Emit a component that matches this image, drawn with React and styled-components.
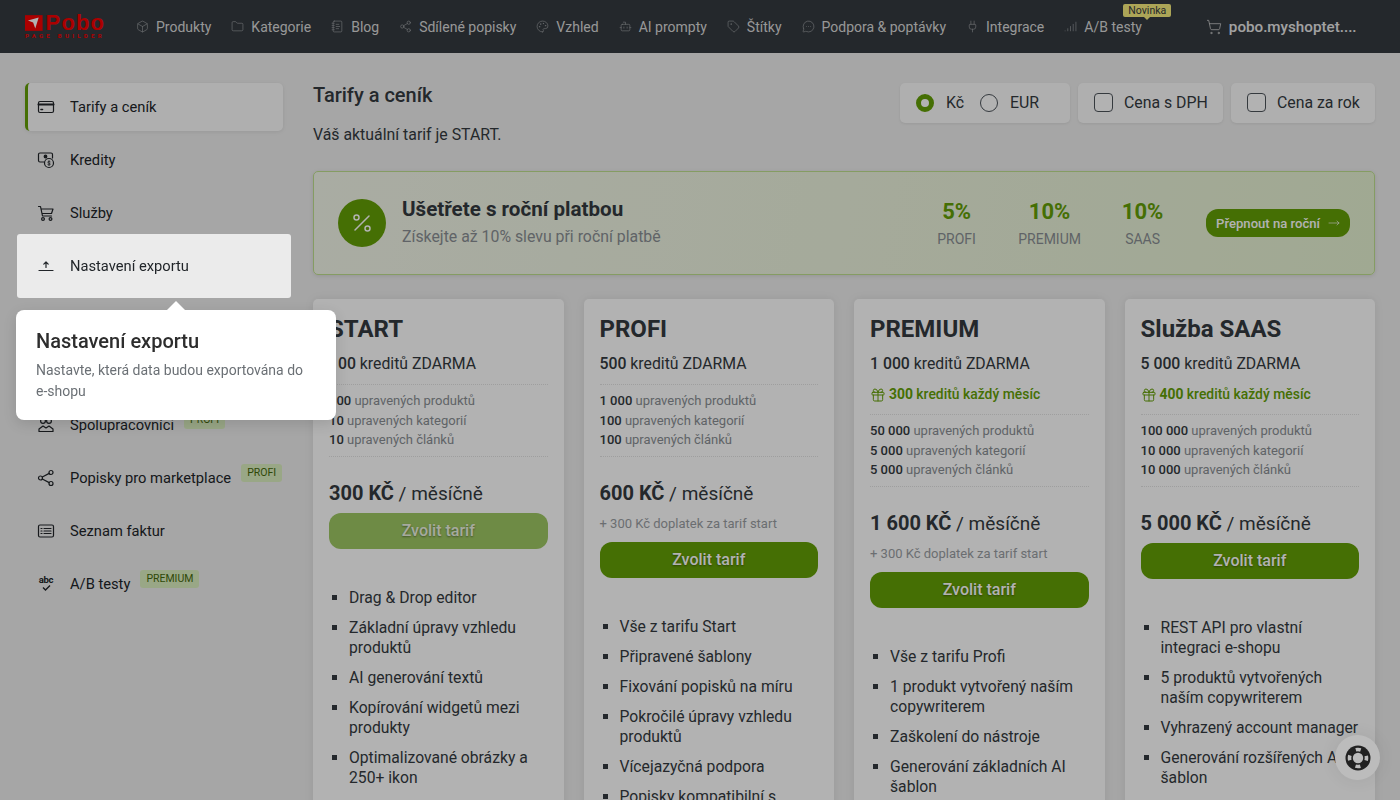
import React from "react";
import styled, { createGlobalStyle } from "styled-components";
import {
  Box, Folder, NotebookText, Share2, Palette, Bot, Tag, MessageCircleMore, Plug, Signal,
  ShoppingCart, Percent, MoveRight, Gift,
} from "lucide-react";

const GlobalStyle = createGlobalStyle`
  html, body { margin: 0; padding: 0; height: 800px; overflow: hidden; }
  body { background: #eeeeee; font-family: Roboto, "Liberation Sans", sans-serif; color: #343a40; }
  * { box-sizing: border-box; }
`;

// Shell
const Page = styled.div`
  width: 1400px;
  height: 800px;
  overflow: hidden;
  position: relative;
`;
const Overlay = styled.div`
  position: fixed;
  inset: 0;
  background: rgba(0, 0, 0, 0.3);
  z-index: 10;
`;

// Header
const Header = styled.header`
  height: 53px;
  background: #343a40;
  display: flex;
  align-items: center;
  padding-left: 25px;
`;
const Logo = styled.div`
  width: 80px;
  margin-right: 31px;
  display: flex;
  flex-direction: column;
  color: #f50000;
  line-height: 1;
`;
const LogoTop = styled.div`
  display: flex;
  align-items: center;
  gap: 3px;
  height: 17px;
  font-weight: 700;
  font-size: 22px;
  letter-spacing: 1.1px;
  font-family: "Liberation Sans", sans-serif;
`;
const LogoSub = styled.div`
  font-size: 6px;
  font-weight: 700;
  letter-spacing: 3.3px;
  margin-top: 2px;
  white-space: nowrap;
`;
const Nav = styled.nav`
  display: flex;
  align-items: center;
  gap: 20px;
`;
const NavLink = styled.a`
  position: relative;
  display: flex;
  align-items: center;
  gap: 7px;
  font-size: 14px;
  color: #d9d9d9;
  white-space: nowrap;
  svg { color: #9a9da0; }
`;
const NewBadge = styled.span`
  position: absolute;
  top: -15px;
  left: 59px;
  width: 48px;
  text-align: center;
  background: #f7ec7d;
  color: #343a40;
  font-size: 10.5px;
  line-height: 13px;
  border-radius: 2px;
  &::after {
    content: "";
    position: absolute;
    left: 50%;
    bottom: -3px;
    margin-left: -3px;
    border-left: 3px solid transparent;
    border-right: 3px solid transparent;
    border-top: 3px solid #f7ec7d;
  }
`;
const Shop = styled.div`
  margin-left: 64px;
  display: flex;
  align-items: center;
  gap: 7px;
  color: #e8e8e8;
  font-size: 15.2px;
  font-weight: 500;
  svg { color: #c8c8c8; }
`;

// Body layout
const Main = styled.div`
  display: grid;
  grid-template-columns: 258px 1fr;
  column-gap: 30px;
  padding: 30px 25px 0;
`;

// Side menu
const Side = styled.aside`
  display: flex;
  flex-direction: column;
  gap: 5px;
`;
const MenuRow = styled.div`
  position: relative;
  height: 48px;
  display: flex;
  align-items: center;
  gap: 15px;
  padding-left: 9px;
  font-size: 14.7px;
  color: #212529;
  border-radius: 5px;
  border-left: 3px solid ${(p) => (p.$active ? "#649f06" : "transparent")};
  background: ${(p) => (p.$active ? "#fbfbfb" : "transparent")};
  box-shadow: ${(p) => (p.$active ? "0 1px 4px rgba(0,0,0,.08)" : "none")};
  svg { flex: none; }
`;
const Spotlight = styled(MenuRow)`
  z-index: 20;
  margin: -8px;
  height: 64px;
  padding-left: 17px;
  background: #ebebeb;
  border-radius: 3px;
  border-left: 3px solid transparent;
`;
const PlanTag = styled.span`
  align-self: flex-start;
  margin: 10px 0 0 -5px;
  background: #dcefc0;
  color: #44690a;
  font-size: 10.5px;
  line-height: 18px;
  padding: 0 6px;
  border-radius: 3px;
`;
const AbcMark = styled.span`
  width: 18px;
  height: 18px;
  flex: none;
  display: flex;
  flex-direction: column;
  align-items: center;
  font-size: 9.5px;
  font-weight: 700;
  line-height: 10px;
  letter-spacing: -0.3px;
  color: #212529;
`;
const Popover = styled.div`
  position: absolute;
  z-index: 20;
  left: 16px;
  top: 310px;
  width: 320px;
  height: 110px;
  background: #fff;
  border-radius: 8px;
  padding: 20px;
  box-shadow: 0 4px 14px rgba(0,0,0,.12);
  &::before {
    content: "";
    position: absolute;
    top: -9px;
    left: 151px;
    border-left: 9px solid transparent;
    border-right: 9px solid transparent;
    border-bottom: 9px solid #fff;
  }
`;
const PopoverTitle = styled.div`
  font-size: 20px;
  font-weight: 500;
  line-height: 23px;
  color: #2d2d2d;
  margin-bottom: 7px;
`;
const PopoverText = styled.div`
  font-size: 14px;
  line-height: 21px;
  color: #6b7075;
`;

// Content
const Content = styled.section`
  min-width: 0;
`;
const TopRow = styled.div`
  display: flex;
  justify-content: space-between;
  height: 88px;
`;
const Title = styled.h1`
  margin: 0;
  font-size: 20px;
  font-weight: 500;
  line-height: 24px;
`;
const Lead = styled.p`
  margin: 18px 0 0;
  font-size: 15.85px;
  line-height: 19px;
  color: #343a40;
`;
const Toggles = styled.div`
  display: flex;
  gap: 8px;
  height: 40px;
`;
const Toggle = styled.div`
  display: flex;
  align-items: center;
  height: 40px;
  width: ${(p) => p.$w}px;
  padding: 0 0 1px 16px;
  background: #fbfbfb;
  border-radius: 5px;
  box-shadow: 0 1px 3px rgba(0,0,0,.08);
  font-size: 15.85px;
  color: #343a40;
`;
const Radio = styled.span`
  width: 18px;
  height: 18px;
  border-radius: 50%;
  margin-right: 12px;
  margin-left: ${(p) => p.$gap || 0}px;
  background: #fff;
  border: ${(p) => (p.$on ? "5px solid #649f06" : "1px solid #4c535a")};
`;
const Check = styled.span`
  width: 19px;
  height: 19px;
  margin-right: 11px;
  border-radius: 4px;
  background: #fff;
  border: 1px solid #4c535a;
`;

const Promo = styled.div`
  height: 104px;
  border: 1px solid #bfe08f;
  border-radius: 5px;
  background: linear-gradient(100deg, #f3f6ea, #e6f2d2);
  box-shadow: 0 1px 4px rgba(0,0,0,.1);
  display: flex;
  align-items: center;
  padding: 0 24px;
`;
const PromoIcon = styled.div`
  width: 48px;
  height: 48px;
  border-radius: 50%;
  background: #649f06;
  color: #fff;
  display: flex;
  align-items: center;
  justify-content: center;
  margin-right: 16px;
`;
const PromoText = styled.div`
  flex: 1;
  margin-bottom: 3px;
`;
const PromoTitle = styled.div`
  font-size: 20.6px;
  font-weight: 700;
  line-height: 24px;
  color: #343a40;
`;
const PromoSub = styled.div`
  font-size: 15.85px;
  line-height: 19px;
  margin-top: 6px;
  color: #8a8f94;
`;
const Stats = styled.div`
  display: flex;
  margin-right: 17px;
`;
const Stat = styled.div`
  width: ${(p) => p.$w}px;
  text-align: center;
`;
const StatValue = styled.div`
  font-size: 22px;
  font-weight: 700;
  line-height: 26px;
  color: #649f06;
`;
const StatLabel = styled.div`
  font-size: 14px;
  line-height: 17px;
  margin-top: 6px;
  color: #8a8f94;
`;
const SwitchButton = styled.div`
  display: flex;
  align-items: center;
  gap: 8px;
  height: 28px;
  padding: 0 10px;
  border-radius: 12px;
  background: #649f06;
  color: #fff;
  font-size: 13.1px;
  font-weight: 500;
  white-space: nowrap;
`;

// Plans
const Plans = styled.div`
  display: grid;
  grid-template-columns: repeat(4, 1fr);
  gap: 20px;
  margin-top: 24px;
  align-items: start;
`;
const Card = styled.article`
  height: 560px;
  overflow: hidden;
  background: #fff;
  border-radius: 5px;
  padding: 16px;
  box-shadow: 0 0 10px rgba(0,0,0,.08);
`;
const PlanName = styled.h2`
  margin: 0;
  font-size: 24px;
  font-weight: 700;
  line-height: 29px;
  color: #343a40;
`;
const Credits = styled.div`
  margin-top: 10px;
  font-size: 15.8px;
  line-height: 19px;
  color: #343a40;
  b { font-weight: 500; }
`;
const Monthly = styled.div`
  margin-top: 13px;
  display: flex;
  align-items: center;
  gap: 3px;
  font-size: 13.9px;
  font-weight: 500;
  line-height: 17px;
  color: #649f06;
  b { font-weight: 700; }
`;
const Limits = styled.div`
  margin-top: 11px;
  padding: 6px 0 6px;
  border-top: 1px dotted #e3e3e3;
  border-bottom: 1px dotted #e3e3e3;
  font-size: 13px;
  line-height: 19.5px;
  color: #8a8f94;
  b { color: #343a40; font-weight: 500; }
`;
const Price = styled.div`
  margin-top: 24px;
  height: 24px;
  font-size: 19px;
  line-height: 24px;
  color: #343a40;
  b { font-size: 20px; font-weight: 700; }
`;
const Surcharge = styled.div`
  margin-top: 11px;
  font-size: 13px;
  line-height: 16px;
  color: #9a9ea3;
`;
const ChooseButton = styled.div`
  margin-top: ${(p) => p.$top}px;
  height: 36px;
  border-radius: 12px;
  background: ${(p) => (p.$current ? "#9ec763" : "#649f06")};
  color: ${(p) => (p.$current ? "#eef4e2" : "#fff")};
  font-size: 16px;
  font-weight: 500;
  display: flex;
  align-items: center;
  justify-content: center;
  text-shadow: 0 1px 2px rgba(0,0,0,.4);
`;
const Features = styled.ul`
  list-style: square;
  margin: 39px 0 0;
  padding: 0 0 0 20px;
  font-size: 15.7px;
  line-height: 20px;
  color: #343a40;
  li { margin-bottom: 10px; }
`;

const Help = styled.div`
  position: absolute;
  z-index: 15;
  right: 20px;
  bottom: 20px;
  width: 45px;
  height: 45px;
  border-radius: 50%;
  background: #bcbcbc;
  box-shadow: 0 0 18px rgba(0,0,0,.07);
  display: flex;
  align-items: center;
  justify-content: center;
`;

// Icons the packages don't have in this shape
const Icon = ({ children }) => (
  <svg width="18" height="18" viewBox="0 0 18 18" fill="none" stroke="#212529" strokeWidth="1.2" strokeLinecap="round" strokeLinejoin="round">
    {children}
  </svg>
);
const CardIcon = () => (
  <Icon>
    <rect x="1.5" y="3.5" width="15" height="11" rx="1.5" />
    <path d="M1.5 6.5h15" strokeWidth="2" />
    <path d="M4 11.5h1.5" strokeWidth="1.6" />
  </Icon>
);
const CreditsIcon = () => (
  <Icon>
    <path d="M7 11H3a1.5 1.5 0 0 1-1.5-1.5v-6A1.5 1.5 0 0 1 3 2h11a1.5 1.5 0 0 1 1.5 1.5V7" />
    <circle cx="8.5" cy="5.5" r="1.3" fill="#212529" />
    <circle cx="12" cy="12" r="4.5" />
    <path d="M13.2 10.6c-.4-.5-2.4-.6-2.4.6s2.5.7 2.5 1.9-2.2 1.1-2.6.5M12 9.7v4.6" strokeWidth=".8" />
  </Icon>
);
const CartIcon = () => (
  <Icon>
    <path d="M1.5 2.5h2L5.5 12h9M4 5h12l-1.5 4.5H5" />
    <circle cx="6" cy="15" r="1.4" />
    <circle cx="13.5" cy="15" r="1.4" />
  </Icon>
);
const ExportIcon = () => (
  <Icon>
    <path d="M2 13.5h14" />
    <path d="M9 10.5V5M6.8 7.2L9 5l2.2 2.2" />
  </Icon>
);
const PeopleIcon = () => (
  <Icon>
    <circle cx="6" cy="5" r="2.4" />
    <circle cx="12" cy="5" r="2.4" />
    <path d="M2 15.5v-2.5l4-3 3 2 3-2 4 3v2.5z" />
  </Icon>
);
const ShareIcon = () => (
  <Icon>
    <circle cx="14" cy="3.5" r="2" />
    <circle cx="3.5" cy="9" r="2" />
    <circle cx="14" cy="14.5" r="2" />
    <path d="M5.3 8l6.9-3.6M5.3 10l6.9 3.6" />
  </Icon>
);
const InvoiceIcon = () => (
  <Icon>
    <rect x="1.5" y="3" width="15" height="12" rx="1.5" />
    <path d="M4 6.5h1M7 6.5h7M4 9h1M7 9h7M4 11.5h1M7 11.5h7" />
  </Icon>
);
const BuoyIcon = () => (
  <svg width="26" height="26" viewBox="0 0 26 26">
    <circle cx="13" cy="13" r="12.5" fill="#212121" />
    <circle cx="13" cy="13" r="5.2" fill="#bcbcbc" />
    <circle cx="13" cy="13" r="8.5" fill="none" stroke="#bcbcbc" strokeWidth="3.6" strokeDasharray="5 8.35" strokeDashoffset="2.5" />
  </svg>
);

const navItems = [
  { label: "Produkty", Glyph: Box },
  { label: "Kategorie", Glyph: Folder },
  { label: "Blog", Glyph: NotebookText },
  { label: "Sdílené popisky", Glyph: Share2 },
  { label: "Vzhled", Glyph: Palette },
  { label: "AI prompty", Glyph: Bot },
  { label: "Štítky", Glyph: Tag },
  { label: "Podpora & poptávky", Glyph: MessageCircleMore },
  { label: "Integrace", Glyph: Plug },
  { label: "A/B testy", Glyph: Signal, badge: "Novinka" },
];

const plans = [
  {
    name: "START", free: "100", limits: ["100", "10", "10"], price: "300 KČ", current: true, buttonTop: 8,
    features: ["Drag & Drop editor", "Základní úpravy vzhledu produktů", "AI generování textů", "Kopírování widgetů mezi produkty", "Optimalizované obrázky a 250+ ikon"],
  },
  {
    name: "PROFI", free: "500", limits: ["1 000", "100", "100"], price: "600 KČ", surcharge: true, buttonTop: 10,
    features: ["Vše z tarifu Start", "Připravené šablony", "Fixování popisků na míru", "Pokročilé úpravy vzhledu produktů", "Vícejazyčná podpora", "Popisky kompatibilní s"],
  },
  {
    name: "PREMIUM", free: "1 000", monthly: "300", limits: ["50 000", "5 000", "5 000"], price: "1 600 KČ", surcharge: true, buttonTop: 10,
    features: ["Vše z tarifu Profi", "1 produkt vytvořený naším copywriterem", "Zaškolení do nástroje", "Generování základních AI šablon"],
  },
  {
    name: "Služba SAAS", free: "5 000", monthly: "400", limits: ["100 000", "10 000", "10 000"], price: "5 000 KČ", buttonTop: 8,
    features: ["REST API pro vlastní integraci e-shopu", "5 produktů vytvořených naším copywriterem", "Vyhrazený account manager", "Generování rozšířených AI šablon"],
  },
];

function PlanCard({ plan }) {
  return (
    <Card>
      <PlanName>{plan.name}</PlanName>
      <Credits><b>{plan.free}</b> kreditů ZDARMA</Credits>
      {plan.monthly && (
        <Monthly><Gift size={16} strokeWidth={1.5} /><span><b>{plan.monthly}</b> kreditů každý měsíc</span></Monthly>
      )}
      <Limits>
        <div><b>{plan.limits[0]}</b> upravených produktů</div>
        <div><b>{plan.limits[1]}</b> upravených kategorií</div>
        <div><b>{plan.limits[2]}</b> upravených článků</div>
      </Limits>
      <Price><b>{plan.price}</b> / měsíčně</Price>
      {plan.surcharge && <Surcharge>+ 300 Kč doplatek za tarif start</Surcharge>}
      <ChooseButton $current={plan.current} $top={plan.buttonTop}>Zvolit tarif</ChooseButton>
      <Features>
        {plan.features.map((f) => <li key={f}>{f}</li>)}
      </Features>
    </Card>
  );
}

export default function App() {
  return (
    <Page>
      <GlobalStyle />
      <Header>
        <Logo>
          <LogoTop>
            <svg width="18" height="16" viewBox="0 0 18 16">
              <rect width="18" height="16" fill="#f50000" />
              <path d="M3 5.5l11-3-3.5 11-2.2-6z" fill="#fff" />
            </svg>
            Pobo
          </LogoTop>
          <LogoSub>PAGE BUILDER</LogoSub>
        </Logo>
        <Nav>
          {navItems.map(({ label, Glyph, badge }) => (
            <NavLink key={label}>
              <Glyph size={13} strokeWidth={1.25} />
              {label}
              {badge && <NewBadge>{badge}</NewBadge>}
            </NavLink>
          ))}
        </Nav>
        <Shop><ShoppingCart size={16} strokeWidth={1.25} />pobo.myshoptet....</Shop>
      </Header>
      <Main>
        <Side>
          <MenuRow $active><CardIcon />Tarify a ceník</MenuRow>
          <MenuRow><CreditsIcon />Kredity</MenuRow>
          <MenuRow><CartIcon />Služby</MenuRow>
          <Spotlight><ExportIcon />Nastavení exportu</Spotlight>
          <MenuRow />
          <MenuRow />
          <MenuRow><PeopleIcon />Spolupracovníci<PlanTag>PROFI</PlanTag></MenuRow>
          <MenuRow><ShareIcon />Popisky pro marketplace<PlanTag>PROFI</PlanTag></MenuRow>
          <MenuRow><InvoiceIcon />Seznam faktur</MenuRow>
          <MenuRow>
            <AbcMark>
              abc
              <svg width="9" height="6" viewBox="0 0 9 6" fill="none" stroke="#212529" strokeWidth="1.4">
                <path d="M1 2.5l2.5 2.5L8 .5" />
              </svg>
            </AbcMark>
            A/B testy<PlanTag>PREMIUM</PlanTag>
          </MenuRow>
        </Side>
        <Content>
          <TopRow>
            <div>
              <Title>Tarify a ceník</Title>
              <Lead>Váš aktuální tarif je START.</Lead>
            </div>
            <Toggles>
              <Toggle $w={170}><Radio $on />Kč<Radio $gap={16} />EUR</Toggle>
              <Toggle $w={145}><Check />Cena s DPH</Toggle>
              <Toggle $w={144}><Check />Cena za rok</Toggle>
            </Toggles>
          </TopRow>
          <Promo>
            <PromoIcon><Percent size={24} strokeWidth={1.5} /></PromoIcon>
            <PromoText>
              <PromoTitle>Ušetřete s roční platbou</PromoTitle>
              <PromoSub>Získejte až 10% slevu při roční platbě</PromoSub>
            </PromoText>
            <Stats>
              <Stat $w={93}><StatValue>5%</StatValue><StatLabel>PROFI</StatLabel></Stat>
              <Stat $w={93}><StatValue>10%</StatValue><StatLabel>PREMIUM</StatLabel></Stat>
              <Stat $w={93}><StatValue>10%</StatValue><StatLabel>SAAS</StatLabel></Stat>
            </Stats>
            <SwitchButton>Přepnout na roční<MoveRight size={12} strokeWidth={1.25} /></SwitchButton>
          </Promo>
          <Plans>
            {plans.map((plan) => <PlanCard key={plan.name} plan={plan} />)}
          </Plans>
        </Content>
      </Main>
      <Overlay />
      <Popover>
        <PopoverTitle>Nastavení exportu</PopoverTitle>
        <PopoverText>Nastavte, která data budou exportována do e-shopu</PopoverText>
      </Popover>
      <Help><BuoyIcon /></Help>
    </Page>
  );
}
